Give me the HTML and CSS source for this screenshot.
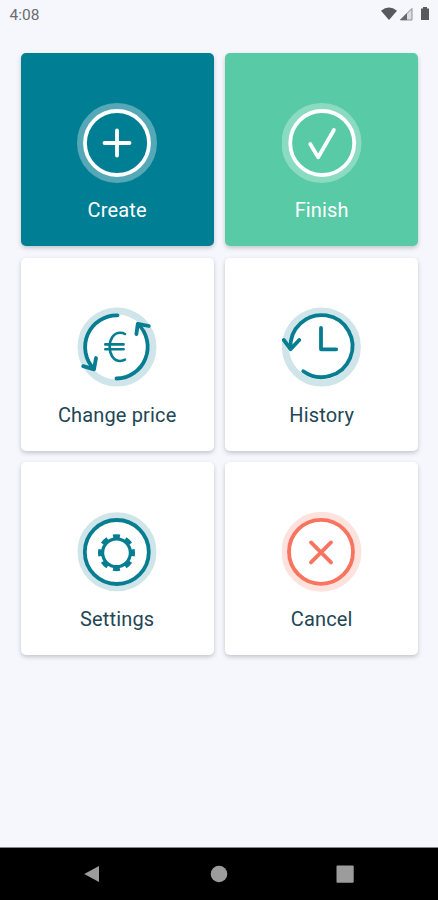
FILE: index.html
```html
<!DOCTYPE html>
<html lang="en">
<head>
    <meta charset="UTF-8">
    <meta name="viewport" content="width=device-width, initial-scale=1.0">
    <title>Menu</title>
    <link rel="stylesheet" href="styles.css">
</head>
<body>
    <header class="status-bar">
        <span class="time">4:08</span>
        <svg class="status-icons" width="52" height="18" viewBox="0 0 52 18">
            <path d="M1 4.7Q9 -1.5 17 4.7L9 14Z" fill="#58595c"/>
            <path d="M32 1.5V14H19.5Z" fill="#dcdee1"/>
            <path d="M32 2.5V14H20.5Z" fill="none" stroke="#8d8f92" stroke-width="1"/>
            <path d="M27 7V14H20Z" fill="#66686b"/>
            <path d="M41 2.5H43V1H47V2.5H49V14H41Z" fill="#58595c"/>
        </svg>
    </header>

    <main class="menu">
        <button class="card card-create">
            <svg class="icon" viewBox="0 0 80 80">
                <circle class="halo" cx="40" cy="40" r="36.5"/>
                <circle class="ring" cx="40" cy="40" r="32"/>
                <path d="M40 27.5V52.5M27.5 40H52.5"/>
            </svg>
            <span class="label">Create</span>
        </button>
        <button class="card card-finish">
            <svg class="icon" viewBox="0 0 80 80">
                <circle class="halo" cx="39.5" cy="40" r="36.5"/>
                <circle class="ring" cx="40.2" cy="40" r="32"/>
                <path d="M28.2 41L36.2 54.2L51.9 27"/>
            </svg>
            <span class="label">Finish</span>
        </button>
        <button class="card">
            <svg class="icon" viewBox="0 0 80 80">
                <circle class="halo" cx="40" cy="40" r="36"/>
                <path d="M40.5 8.3A31.7 31.7 0 0 0 17 62"/>
                <path d="M6.2 59.2L17 62.3L19 51"/>
                <path d="M39.5 71.5A31.7 31.7 0 0 0 61 17"/>
                <path d="M59.4 27L60.8 16.8L71.8 19"/>
                <path class="thin" d="M48 27C46.4 26 44.8 25.7 43.2 25.7C36.8 25.7 32.7 31.6 32.7 39.8S36.8 54 43.2 54C44.8 54 46.4 53.7 48 52.7M28.3 37.4H46.6M28.3 42.2H46.6"/>
            </svg>
            <span class="label">Change price</span>
        </button>
        <button class="card">
            <svg class="icon" viewBox="0 0 80 80">
                <circle class="halo" cx="39.4" cy="40" r="36"/>
                <path d="M21.3 64.2A31 31 0 1 0 8.6 41.5"/>
                <path d="M1.8 33L8.6 42.2L17.2 33"/>
                <path d="M39 21V42.3H54.2"/>
            </svg>
            <span class="label">History</span>
        </button>
        <button class="card">
            <svg class="icon" viewBox="0 0 80 80">
                <circle class="halo" cx="40" cy="39.8" r="36"/>
                <circle class="ring" cx="39.8" cy="40" r="32"/>
                <circle class="gear" cx="39.5" cy="40.7" r="13.9"/>
                <!-- gear teeth -->
                <circle class="teeth" cx="39.5" cy="40.7" r="16.4" pathLength="80"/>
            </svg>
            <span class="label">Settings</span>
        </button>
        <button class="card card-cancel">
            <svg class="icon" viewBox="0 0 80 80">
                <circle class="halo" cx="39.5" cy="39.8" r="36.5"/>
                <circle class="ring" cx="39" cy="39.8" r="32"/>
                <path d="M29 30.4L49 50.4M49 30.4L29 50.4"/>
            </svg>
            <span class="label">Cancel</span>
        </button>
    </main>

    <nav class="nav-bar">
        <svg viewBox="0 0 18 18"><path d="M1.2 9L16 1V17Z"/></svg>
        <svg viewBox="0 0 18 18"><circle cx="9" cy="9" r="8.3"/></svg>
        <svg viewBox="0 0 18 18"><rect x="0.5" y="0.5" width="17.2" height="17.2" rx="1"/></svg>
    </nav>
</body>
</html>
```

FILE: styles.css
```css
body {
    display: flex;
    flex-direction: column;
    height: 900px;
    margin: 0;
    background-color: #f5f7fc;
    font-family: Roboto, sans-serif;
    overflow: hidden;
}

.status-bar {
    display: flex;
    justify-content: space-between;
    box-sizing: border-box;
    height: 53px;
    padding: 6px 6px 0 9.5px;
}

.time {
    color: #6a6c70;
    font-size: 15.5px;
    line-height: 18px;
}

.menu {
    flex: 1;
    display: grid;
    grid-template-columns: 193px 193px;
    grid-auto-rows: 193px;
    gap: 11.5px;
    align-content: start;
    padding: 0 20.7px;
}

.card {
    display: flex;
    flex-direction: column;
    align-items: center;
    padding: 49.5px 0 0;
    border: none;
    border-radius: 5px;
    background-color: #fff;
    box-shadow: 0 2px 4px rgba(40, 50, 60, 0.25);
    color: #234655;
    font-family: inherit;
    cursor: pointer;
}

.card-create {
    background-color: #007e94;
    color: #fff;
}

.card-finish {
    background-color: #58caa5;
    color: #fff;
}

.label {
    margin-top: 15.8px;
    font-size: 20px;
    line-height: 24px;
    letter-spacing: 0.15px;
}

.icon {
    width: 80px;
    height: 80px;
    fill: none;
    stroke: #067d91;
    stroke-width: 3.8;
    stroke-linecap: round;
    stroke-linejoin: round;
}

.icon .halo {
    stroke: #cfe5e9;
    stroke-width: 7;
}

.icon .thin {
    stroke-width: 2.6;
}

.icon .gear {
    stroke-width: 3.2;
}

.icon .teeth {
    stroke-width: 4.2;
    stroke-linecap: butt;
    stroke-dasharray: 5.4 4.6;
    stroke-dashoffset: 2.7;
}

.card-create .icon,
.card-finish .icon {
    stroke: #fff;
}

.card-create .halo {
    stroke: #55a9b7;
}

.card-finish .halo {
    stroke: #8bdbc1;
}

.card-cancel .icon {
    stroke: #f9745f;
}

.card-cancel .halo {
    stroke: #fee2de;
}

.nav-bar {
    display: flex;
    justify-content: space-between;
    align-items: center;
    box-sizing: border-box;
    height: 53px;
    padding: 0 84px 0 83px;
    border-top: 1px solid #85868a;
    background-color: #000;
}

.nav-bar svg {
    width: 18px;
    height: 18px;
    fill: #9c9c9c;
}
```
